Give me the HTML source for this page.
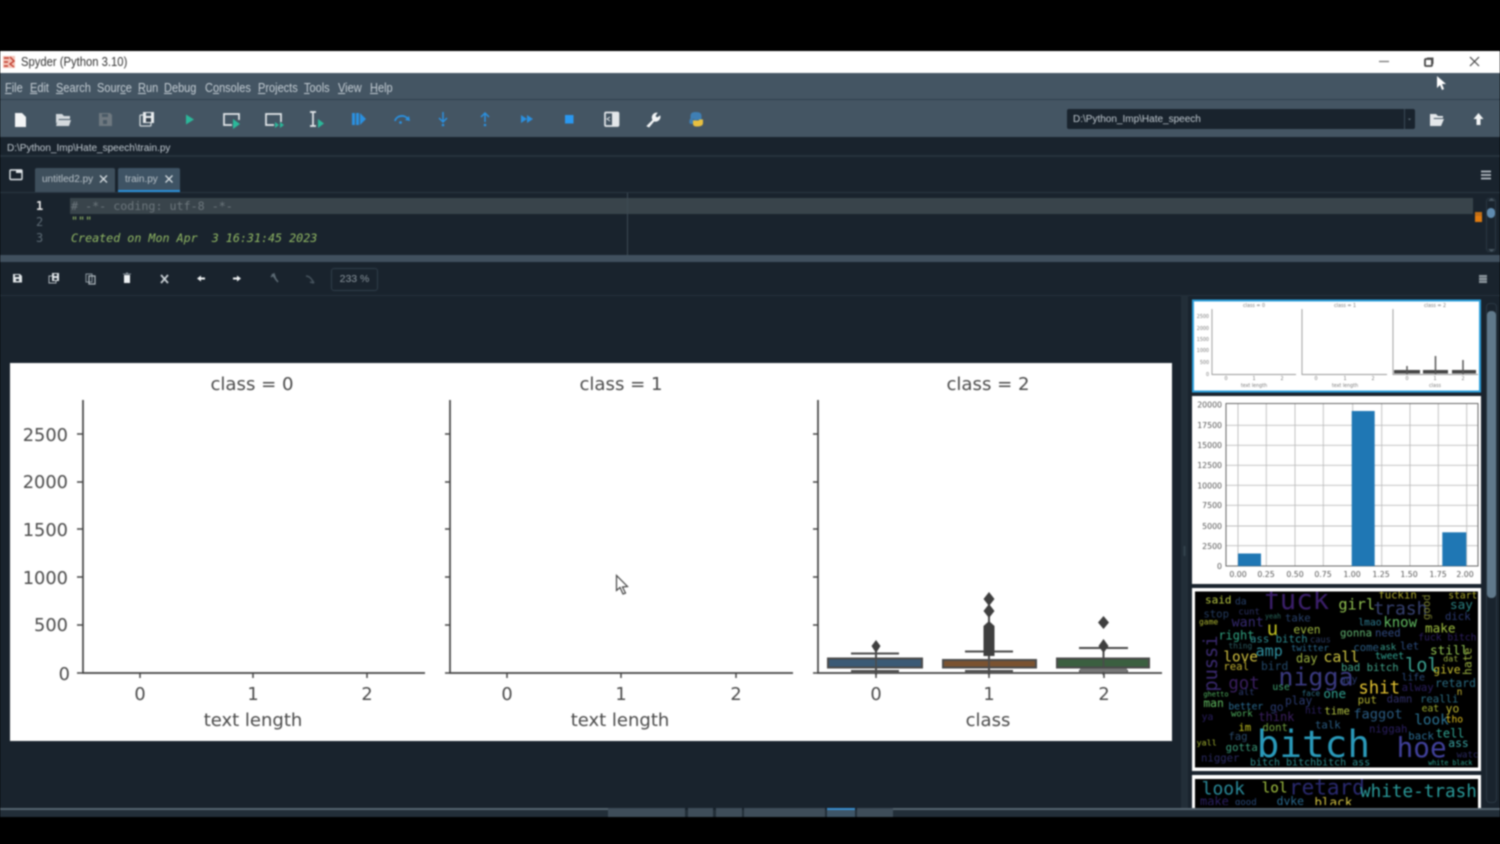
<!DOCTYPE html>
<html><head><meta charset="utf-8"><title>Spyder (Python 3.10)</title>
<style>
html,body{margin:0;padding:0;background:#000;width:1500px;height:844px;overflow:hidden}
#f{position:absolute;left:0;top:0;width:1500px;height:844px;filter:blur(.7px);overflow:hidden;font-family:"Liberation Sans",sans-serif}
.a{position:absolute}
svg{position:absolute;left:0;top:0;overflow:visible}
.m{position:absolute;top:81px;font-size:12.5px;color:#c3ccd3;line-height:15px;transform:scaleX(.88);transform-origin:0 0}
.m u{text-decoration:underline}
.c{font-family:"DejaVu Sans Mono","Liberation Mono",monospace;font-size:11.7px;white-space:pre}
</style></head><body><div id="f">
<div class="a" style="left:0;top:51px;width:1500px;height:22px;background:#fff"></div>
<div class="a" style="left:21px;top:55px;font-size:12.5px;color:#333;transform:scaleX(.9);transform-origin:0 0;white-space:nowrap">Spyder (Python 3.10)</div>
<div class="a" style="left:0;top:73px;width:1500px;height:27px;background:#445563;border-bottom:1px solid #2f3f4c;box-sizing:border-box"></div>
<div class="a" style="left:0;top:100px;width:1500px;height:37px;background:#445563"></div>
<div class="a" style="left:0;top:137px;width:1500px;height:680px;background:#19232d"></div>
<div class="a" style="left:0;top:155px;width:1500px;height:2px;background:#25323d"></div>
<span class="m" style="left:5px"><u>F</u>ile</span><span class="m" style="left:30px"><u>E</u>dit</span><span class="m" style="left:56px"><u>S</u>earch</span><span class="m" style="left:97px">Sour<u>c</u>e</span><span class="m" style="left:138px"><u>R</u>un</span><span class="m" style="left:164px"><u>D</u>ebug</span><span class="m" style="left:205px">C<u>o</u>nsoles</span><span class="m" style="left:258px"><u>P</u>rojects</span><span class="m" style="left:304px"><u>T</u>ools</span><span class="m" style="left:338px"><u>V</u>iew</span><span class="m" style="left:370px"><u>H</u>elp</span>
<div class="a" style="left:7px;top:143px;font-size:10px;color:#c0c9d0">D:\Python_Imp\Hate_speech\train.py</div>
<div class="a" style="left:1067px;top:109px;width:348px;height:20px;background:#19232d;border-radius:2px"></div>
<div class="a" style="left:1404px;top:109px;width:1px;height:20px;background:#3a4a57"></div>
<div class="a" style="left:1073px;top:114px;font-size:10px;color:#c0c9d0">D:\Python_Imp\Hate_speech</div>
<div class="a" style="left:35px;top:168px;width:80px;height:24px;background:#3e4f5c;border-radius:2px 2px 0 0"></div>
<div class="a" style="left:118px;top:168px;width:62px;height:24px;background:#3e5364;border-radius:2px 2px 0 0;border-bottom:2px solid #2a8fd8;box-sizing:border-box"></div>
<div class="a" style="left:42px;top:174px;font-size:10px;color:#b7c0c7">untitled2.py</div>
<div class="a" style="left:125px;top:174px;font-size:10px;color:#b7c0c7">train.py</div>
<div class="a" style="left:0;top:192px;width:1500px;height:1px;background:#2a3742"></div>
<div class="a" style="left:70px;top:198px;width:1403px;height:16px;background:#39444b"></div>
<div class="a" style="left:627px;top:193px;width:1px;height:62px;background:#3d4a54"></div>
<div class="a" style="left:36px;top:199px;font:bold 12px 'DejaVu Sans Mono',monospace;color:#e6e6e6">1</div>
<div class="a" style="left:36px;top:215px;font:12px 'DejaVu Sans Mono',monospace;color:#5c6a74">2</div>
<div class="a" style="left:36px;top:231px;font:12px 'DejaVu Sans Mono',monospace;color:#5c6a74">3</div>
<div class="a c" style="left:71px;top:199px;color:#6c767c"># -*- coding: utf-8 -*-</div>
<div class="a c" style="left:71px;top:214px;color:#9bbf6a">"""</div>
<div class="a c" style="left:71px;top:231px;color:#92b964;font-style:italic">Created on Mon Apr  3 16:31:45 2023</div>
<div class="a" style="left:1475px;top:212px;width:7px;height:4px;background:#c46f14"></div>
<div class="a" style="left:1475px;top:216px;width:7px;height:6px;background:#e07b10"></div>
<div class="a" style="left:1486px;top:198px;width:10px;height:54px;border:1px solid #2a3843;box-sizing:border-box;border-radius:3px"></div>
<div class="a" style="left:1487px;top:208px;width:8px;height:10px;background:#5f8bb0;border-radius:4px"></div>
<div class="a" style="left:0;top:255px;width:1500px;height:7px;background:#40505e"></div>
<div class="a" style="left:331px;top:268px;width:45px;height:21px;border:1px solid #2f3d49;border-radius:3px;font-size:10.5px;color:#8a959d;text-align:center;line-height:21px">233 %</div>
<div class="a" style="left:0;top:295px;width:1500px;height:1px;background:#25323d"></div>
<div class="a" style="left:1181px;top:295px;width:7px;height:513px;background:#222e38"></div>
<div class="a" style="left:1483px;top:296px;width:17px;height:512px;background:#19232d"></div>
<div class="a" style="left:1486px;top:303px;width:11px;height:500px;border:1px solid #2a3843;border-radius:4px;box-sizing:border-box"></div>
<div class="a" style="left:1487px;top:311px;width:9px;height:287px;background:#60798b;border-radius:4px"></div>
<div class="a" style="left:10px;top:363px;width:1162px;height:378px;background:#fff"></div>
<div class="a" style="left:0;top:808px;width:608px;height:2px;background:#55646f"></div>
<div class="a" style="left:893px;top:808px;width:607px;height:2px;background:#55646f"></div>
<div class="a" style="left:0;top:810px;width:1500px;height:7px;background:#222e38"></div>
<div class="a" style="left:608px;top:808px;width:77px;height:9px;background:#3e4d59"></div>
<div class="a" style="left:688px;top:808px;width:25px;height:9px;background:#3e4d59"></div>
<div class="a" style="left:716px;top:808px;width:26px;height:9px;background:#3e4d59"></div>
<div class="a" style="left:744px;top:808px;width:81px;height:9px;background:#3e4d59"></div>
<div class="a" style="left:827px;top:808px;width:28px;height:9px;background:#3e5567;border-top:2px solid #3a8fd0;box-sizing:border-box"></div>
<div class="a" style="left:857px;top:808px;width:36px;height:9px;background:#3e4d59"></div>

<svg width="1500" height="844" viewBox="0 0 1500 844">
<!-- app icon / window controls -->
<rect x="3" y="56" width="12" height="12" fill="#f4c4b8"/><path d="M4 58h5M4 62h4M4 66h4M10 57l4 4-4 3 4 3" stroke="#c0392b" stroke-width="1.400" fill="none"/>
<path d="M1379 61.500h10" stroke="#777" stroke-width="1.300"/>
<rect x="1425" y="59" width="7" height="7" rx="1" fill="none" stroke="#444" stroke-width="1.800"/><path d="M1427 58h6v6" fill="none" stroke="#555"/>
<path d="M1470 57l9 9M1479 57l-9 9" stroke="#444" stroke-width="1.200"/>
<path d="M1437 76v12l3-3 2 5 2-1-2-5h4z" fill="#fff"/>

<!-- main toolbar icons -->
<path d="M15 113h7l4 4v10H15z" fill="#f2f4f5"/>
<path d="M56 114h6l2 2h6v3H59l-3 5zM58 120h13l-2 6H56z" fill="#d3d9dd"/>
<path d="M99 113h11l2 2v11H99z" fill="#6e7880"/><rect x="102" y="114" width="6" height="3" fill="#4a5a66"/><rect x="103" y="120" width="4" height="4" fill="#4a5a66"/>
<rect x="140" y="115" width="11" height="11" rx="1" fill="none" stroke="#cfd6da" stroke-width="1.300"/><path d="M143 112h11v11h-11z" fill="#e8ecee"/><rect x="146" y="113" width="5" height="3" fill="#445563"/><rect x="146" y="118" width="5" height="4" fill="#333f4a"/>
<path d="M186 114.500l8 5-8 5z" fill="#2bb89a"/>
<path d="M232 125h-8v-11h15v6" fill="none" stroke="#e3e7ea" stroke-width="1.700"/><path d="M233 119l7 5-7 5z" fill="#2bb89a"/>
<path d="M274 125h-8v-11h15v8" fill="none" stroke="#e3e7ea" stroke-width="1.700"/><path d="M275 122l4 3-4 3zM280 122l4 3-4 3z" fill="#2bb89a"/>
<path d="M310 112h6M310 126h6M313 112v14" stroke="#e3e7ea" stroke-width="1.700" fill="none"/><path d="M318 119l6 4.500-6 4.500z" fill="#2bb89a"/>
<path d="M352 113h3v12h-3zM356 113h3v12h-3z" fill="#2a90e0"/><path d="M360 113l6 6-6 6z" fill="#2a90e0"/>
<path d="M395 121a7 6 0 0 1 13-2" fill="none" stroke="#2a90e0" stroke-width="1.800"/><path d="M405 120l5 1-1-5z" fill="#2a90e0"/><circle cx="400.500" cy="122.500" r="1.400" fill="#2a90e0"/>
<path d="M443 112v9M439 118l4 4 4-4" fill="none" stroke="#2a90e0" stroke-width="1.500"/><circle cx="443" cy="125" r="1.300" fill="#2a90e0"/>
<path d="M485 114v8M481 117l4-4 4 4" fill="none" stroke="#2a90e0" stroke-width="1.500"/><circle cx="485" cy="125" r="1.300" fill="#2a90e0"/>
<path d="M521 115l6 4-6 4zM527 115l6 4-6 4z" fill="#2a90e0"/>
<rect x="565" y="115" width="8.500" height="8.500" fill="#2a98f0"/>
<rect x="605" y="112.500" width="13.500" height="13.500" rx="1" fill="none" stroke="#e3e7ea" stroke-width="1.700"/><rect x="612" y="113" width="6" height="13" fill="#e3e7ea"/><path d="M610 117l-3 2 3 2" fill="none" stroke="#e3e7ea"/>
<path d="M647 126l6-6a4.500 4.500 0 0 1 4-7l-2 3 2 2 3-2a4.500 4.500 0 0 1-6 5l-5 6z" fill="#f2f4f5" stroke="#f2f4f5" stroke-width=".8"/>
<path d="M691 119v-3c0-3 2-3.500 5-3.500s5 .5 5 3v3h-6v1h7" fill="#3f7fb4" stroke="#3f7fb4"/><path d="M691 119h-1c-1 2-1 5 1 5h2v-3h6" fill="#3f7fb4"/>
<path d="M703 119v4c0 3-3 3.500-6 3.500s-4-1-4-3v-3h6v-1h4z" fill="#e8c040"/>

<!-- right icons -->
<path d="M1430 114h6l2 2h5v2h-9l-4 8zM1433 119h11l-3 7h-11z" fill="#e3e7ea"/>
<path d="M1478.500 113l5 6h-3v6h-4v-6h-3z" fill="#f2f4f5"/>
<path d="M1408 118.500h3l-1.500 2z" fill="#5a6872"/>

<!-- tab bar icons -->
<rect x="10" y="170" width="12" height="9.500" rx="1" fill="none" stroke="#dfe4e7" stroke-width="1.400"/><path d="M16 170h6v3h-6z" fill="#dfe4e7"/>
<path d="M100 175.500l7 7M107 175.500l-7 7M165.500 175.500l7 7M172.500 175.500l-7 7" stroke="#d5dce0" stroke-width="1.300"/>
<path d="M1481 171.500h10M1481 175h10M1481 178.500h10" stroke="#b5bec5" stroke-width="1.700"/>
<path d="M1488 201l3.500-3 3.500 3zM1488 249l3.500 3 3.500-3z" fill="#46545f"/>

<!-- plots toolbar -->
<path d="M13 274h7l2 2v6.500h-9z" fill="#dfe4e7"/><rect x="15" y="275" width="4" height="2" fill="#19232d"/><rect x="16" y="279" width="3" height="2" fill="#19232d"/>
<rect x="49" y="276" width="7" height="7" fill="none" stroke="#aeb6bc"/><path d="M52 273h7v8h-7z" fill="#dfe4e7"/><rect x="54" y="274" width="3" height="2" fill="#19232d"/><rect x="54" y="278" width="3" height="2" fill="#19232d"/>
<rect x="86" y="274" width="6" height="8" fill="none" stroke="#8a959d"/><rect x="89" y="276" width="6" height="8" fill="none" stroke="#b0b9bf" stroke-width="1.200"/>
<rect x="124" y="275" width="6" height="8" fill="#eef1f3"/><path d="M123 274h8M126 273h2" stroke="#8a959d"/>
<path d="M161 275l7 8M168 275l-7 8" stroke="#c7ced3" stroke-width="1.800"/>
<path d="M197 278.500l4-3v2h4v2h-4v2z" fill="#eef1f3"/>
<path d="M241 278.500l-4-3v2h-4v2h4v2z" fill="#eef1f3"/>
<path d="M272 274l6 8M271 277l3-3 2 6" stroke="#5c6a74" stroke-width="1.500" fill="none"/>
<path d="M306 276c3 0 5 2 8 7M310 282l4 1" stroke="#47545e" stroke-width="1.500" fill="none"/>
<path d="M1479 275h8v8h-8z" fill="#8d979e"/><path d="M1479 277.500h8M1479 280.500h8" stroke="#19232d" stroke-width=".6"/>
<rect x="1183.500" y="546" width="2" height="10" fill="#33414c"/>

<!-- main plot -->
<g font-family="'DejaVu Sans',sans-serif" fill="#4a4a4a" font-size="17.800">
<path d="M83 400V673H425M450 400V673H793M818 400V673H1162" stroke="#444" stroke-width="1.700" fill="none"/>
<path d="M77 434h6M77 482h6M77 529h6M77 577h6M77 625h6M77 673h6M445 434h5M445 482h5M445 529h5M445 577h5M445 625h5M445 673h5M813 434h5M813 482h5M813 529h5M813 577h5M813 625h5M813 673h5" stroke="#444" stroke-width="1.500"/>
<path d="M140 673v5M253 673v5M367 673v5M507 673v5M621 673v5M736 673v5M876 673v5M989 673v5M1104 673v5" stroke="#444" stroke-width="1.500"/>
<g text-anchor="end"><text x="68" y="441">2500</text><text x="68" y="488">2000</text><text x="68" y="536">1500</text><text x="68" y="584">1000</text><text x="68" y="631">500</text><text x="70" y="680">0</text></g>
<g text-anchor="middle"><text x="140" y="700">0</text><text x="253" y="700">1</text><text x="367" y="700">2</text><text x="507" y="700">0</text><text x="621" y="700">1</text><text x="736" y="700">2</text><text x="876" y="700">0</text><text x="989" y="700">1</text><text x="1104" y="700">2</text>
<text x="253" y="726" font-size="18">text length</text><text x="620" y="726" font-size="18">text length</text><text x="988" y="726" font-size="18">class</text>
<text x="252" y="390" font-size="18.100">class = 0</text><text x="621" y="390" font-size="18.100">class = 1</text><text x="988" y="390" font-size="18.100">class = 2</text></g>
<!-- boxes -->
<g stroke="#4a4a4a" stroke-width="2" fill="none">
<path d="M851 653.500h48M851 671h48M965 651.500h48M965 671h48M1079 648h49M1079 671h49M876 645v30M989 600v75M1103.500 640v35"/>
</g>
<rect x="1080" y="667" width="47" height="5" fill="#777"/>
<rect x="828" y="658.500" width="94" height="9" fill="#3b5a75" stroke="#4a4a4a" stroke-width="2"/>
<rect x="943" y="660" width="93" height="7.500" fill="#7a5230" stroke="#4a4a4a" stroke-width="2"/>
<rect x="1057" y="658.500" width="92" height="9" fill="#3b5f40" stroke="#4a4a4a" stroke-width="2"/>
<path d="M876 658v9M989 660v8M1103.500 658v9" stroke="#4a4a4a" stroke-width="1.500"/>
<g fill="#3f3f3f"><path d="M876 640l4.500 6-4.500 7-4.500-7zM989 592l5.500 7-5.500 7-5.500-7zM989 604l5.500 7-5.500 7-5.500-7zM1103.500 616l5.500 6.500-5.500 6.500-5.500-6.500zM1103.500 639l5 7-5 7-5-7z"/><path d="M989 621l5.500 5v30h-11v-30z"/></g>
</g>

<!-- thumbnail 1 -->
<rect x="1193" y="300.500" width="287" height="91" fill="#fff" stroke="#2a9fdc" stroke-width="2"/>
<g font-family="'DejaVu Sans',sans-serif" fill="#777" font-size="4.800">
<path d="M1212 309V374.500H1296M1302 309V374.500H1387M1393 309V374.500H1478" stroke="#999" stroke-width=".9" fill="none"/>
<g text-anchor="end"><text x="1209" y="318">2500</text><text x="1209" y="330">2000</text><text x="1209" y="341">1500</text><text x="1209" y="352">1000</text><text x="1209" y="364">500</text><text x="1209" y="376">0</text></g>
<g text-anchor="middle"><text x="1226" y="380">0</text><text x="1254" y="380">1</text><text x="1282" y="380">2</text><text x="1316" y="380">0</text><text x="1345" y="380">1</text><text x="1373" y="380">2</text><text x="1407" y="380">0</text><text x="1435" y="380">1</text><text x="1463" y="380">2</text>
<text x="1254" y="387">text length</text><text x="1345" y="387">text length</text><text x="1435" y="387">class</text><text x="1254" y="307">class = 0</text><text x="1345" y="307">class = 1</text><text x="1435" y="307">class = 2</text></g>
<path d="M1394 370h26v3.500h-26zM1423 370h25v3.500h-25zM1452 370h24v3.500h-24z" fill="#444"/>
<path d="M1407 366v8M1435.500 356v18M1463 360v14" stroke="#555" stroke-width="1.500"/>
</g>

<!-- thumbnail 2 -->
<rect x="1192" y="396" width="289" height="188" fill="#fff"/>
<g stroke="#bdbdbd" stroke-width=".9"><path d="M1238 404V566M1266.300 404V566M1295 404V566M1323.300 404V566M1352.700 404V566M1381.700 404V566M1410 404V566M1438.300 404V566M1466.700 404V566M1226 545.700H1478M1226 526H1478M1226 505.300H1478M1226 485.300H1478M1226 465.300H1478M1226 445.300H1478M1226 425.300H1478"/></g>
<rect x="1226" y="403.500" width="252" height="162.500" fill="none" stroke="#666" stroke-width="1"/>
<rect x="1238" y="553.500" width="23" height="12.500" fill="#1f77b4"/><rect x="1351.700" y="411" width="23" height="155" fill="#1f77b4"/><rect x="1442.300" y="532.300" width="24" height="33.700" fill="#1f77b4"/>
<g font-family="'DejaVu Sans',sans-serif" fill="#555" font-size="7.800">
<g text-anchor="end"><text x="1222" y="407.500">20000</text><text x="1222" y="428">17500</text><text x="1222" y="448">15000</text><text x="1222" y="468">12500</text><text x="1222" y="488.500">10000</text><text x="1222" y="508">7500</text><text x="1222" y="529">5000</text><text x="1222" y="549">2500</text><text x="1222" y="569">0</text></g>
<g text-anchor="middle"><text x="1238" y="577">0.00</text><text x="1266" y="577">0.25</text><text x="1295" y="577">0.50</text><text x="1323" y="577">0.75</text><text x="1352" y="577">1.00</text><text x="1381" y="577">1.25</text><text x="1409" y="577">1.50</text><text x="1438" y="577">1.75</text><text x="1465" y="577">2.00</text></g></g>

<!-- word clouds -->
<rect x="1192" y="588" width="289" height="183" fill="#fff"/>
<rect x="1195" y="591.500" width="283" height="176" fill="#000"/>
<rect x="1192" y="775" width="289" height="33" fill="#fff"/>
<rect x="1195" y="779" width="283" height="29" fill="#000"/>
<defs><clipPath id="c1"><rect x="30" y="20" width="850" height="525"/></clipPath><clipPath id="c2"><rect x="30" y="582" width="850" height="78"/></clipPath></defs>
<g transform="translate(1185 585) scale(.3333)" font-family="'DejaVu Sans Mono','Liberation Mono',monospace">
<g clip-path="url(#c1)">
<text x="60" y="55" font-size="33" fill="#b5c440">said</text><text x="235" y="72" font-size="82" fill="#3b1f6a">fuck</text><text x="460" y="74" font-size="46" fill="#8fbf50">girl</text><text x="565" y="88" font-size="54" fill="#35406f">trash</text><text x="580" y="41" font-size="32" fill="#a9a52a">fuckin</text><text x="790" y="40" font-size="29" fill="#a8a52a">start</text><text x="795" y="72" font-size="38" fill="#2a7f80">say</text><text x="150" y="58" font-size="29" fill="#28406a">da</text>
<text x="55" y="98" font-size="32" fill="#233a5c">stop</text><text x="140" y="125" font-size="40" fill="#352a70">want</text><text x="300" y="110" font-size="32" fill="#28406a">take</text><text x="245" y="150" font-size="58" fill="#c0c020">u</text><text x="325" y="146" font-size="34" fill="#9fb840">even</text><text x="520" y="122" font-size="29" fill="#2d7a90">lmao</text><text x="595" y="126" font-size="42" fill="#60b860">know</text><text x="720" y="143" font-size="38" fill="#a0c040">make</text><text x="780" y="105" font-size="32" fill="#2a3a70">dick</text><text x="42" y="118" font-size="24" fill="#a8b030">game</text><text x="160" y="88" font-size="27" fill="#2a3060">cunt</text><text x="240" y="100" font-size="20" fill="#2a6a60">yeah</text>
<text x="100" y="163" font-size="36" fill="#30a080">right</text><text x="195" y="173" font-size="32" fill="#2d8a90">ass bitch</text><text x="465" y="155" font-size="32" fill="#60b070">gonna</text><text x="570" y="155" font-size="32" fill="#304a80">need</text><text x="700" y="166" font-size="29" fill="#2d1f60">fuck bitch</text><text x="375" y="172" font-size="26" fill="#2a3a60">caus</text>
<text x="115" y="229" font-size="43" fill="#d0c040">love</text><text x="212" y="213" font-size="45" fill="#3090a0">amp</text><text x="318" y="198" font-size="27" fill="#2a6a90">twitter</text><text x="505" y="198" font-size="32" fill="#2a5a80">come</text><text x="585" y="195" font-size="27" fill="#3aa090">ask</text><text x="645" y="193" font-size="32" fill="#2a4a7a">let</text><text x="735" y="209" font-size="38" fill="#90c050">still</text><text x="415" y="231" font-size="45" fill="#c9c040">call</text><text x="333" y="233" font-size="36" fill="#9ab040">day</text><text x="570" y="222" font-size="29" fill="#30a090">tweet</text><text x="775" y="230" font-size="25" fill="#9ab040">dat</text><text x="130" y="190" font-size="24" fill="#2a5a60">thing</text>
<text x="115" y="255" font-size="32" fill="#c0b030">real</text><text x="228" y="255" font-size="34" fill="#23486a">bird</text><text x="468" y="258" font-size="32" fill="#40a088">bad bitch</text><text x="660" y="259" font-size="56" fill="#3aa090">lol</text><text x="745" y="266" font-size="34" fill="#c9c030">give</text><text x="280" y="302" font-size="75" fill="#3a3a80">nigga</text><text x="465" y="292" font-size="29" fill="#2a3a70">guy</text><text x="650" y="286" font-size="29" fill="#2a4a7a">life</text>
<text transform="translate(96 320) rotate(-90)" font-size="56" fill="#3a2a70">pussi</text><text x="130" y="312" font-size="52" fill="#3a1f60">got</text><text transform="translate(860 270) rotate(-90)" font-size="34" fill="#9ab040">hate</text><text transform="translate(735 105) rotate(-90)" font-size="32" fill="#7a8030">good</text>
<text x="520" y="326" font-size="52" fill="#e0c030">shit</text><text x="650" y="318" font-size="32" fill="#2a1f60">alway</text><text x="750" y="306" font-size="34" fill="#2a6a80">retard</text><text x="262" y="315" font-size="29" fill="#40a070">use</text><text x="415" y="339" font-size="38" fill="#30a090">one</text><text x="55" y="335" font-size="21" fill="#50b060">ghetto</text><text x="160" y="330" font-size="27" fill="#2a3a70">alt</text><text x="350" y="333" font-size="23" fill="#2a6a80">face</text><text x="815" y="330" font-size="29" fill="#c0b030">n</text>
<text x="55" y="366" font-size="34" fill="#60b860">man</text><text x="130" y="373" font-size="29" fill="#2a6a90">better</text><text x="300" y="359" font-size="34" fill="#2a3a70">play</text><text x="518" y="356" font-size="32" fill="#b0b030">put</text><text x="605" y="353" font-size="32" fill="#30306a">damn</text><text x="705" y="353" font-size="32" fill="#2a6a80">realli</text><text x="255" y="378" font-size="34" fill="#2a3a70">go</text>
<text x="138" y="395" font-size="27" fill="#50b060">work</text><text x="418" y="388" font-size="32" fill="#b0c040">time</text><text x="505" y="401" font-size="41" fill="#2a5a80">faggot</text><text x="710" y="380" font-size="29" fill="#a0b030">eat</text><text x="782" y="383" font-size="34" fill="#c0b830">yo</text><text x="220" y="408" font-size="36" fill="#3a1f60">think</text><text x="688" y="419" font-size="43" fill="#2a7090">look</text><text x="782" y="412" font-size="29" fill="#e0c020">tho</text><text x="360" y="385" font-size="29" fill="#2a1f60">hit</text>
<text x="390" y="431" font-size="32" fill="#2a5a80">talk</text><text x="552" y="442" font-size="32" fill="#2a1f60">niggah</text><text x="160" y="438" font-size="32" fill="#c0c020">im</text><text x="232" y="438" font-size="32" fill="#70a040">dont</text><text x="50" y="405" font-size="29" fill="#2a1f60">ya</text>
<text x="215" y="516" font-size="113" fill="#2a9aba">bitch</text><text x="130" y="465" font-size="32" fill="#2a4a6a">fag</text><text x="670" y="463" font-size="32" fill="#2a6a90">back</text><text x="752" y="458" font-size="36" fill="#30a090">tell</text><text x="790" y="486" font-size="34" fill="#3aa0a0">ass</text><text x="35" y="482" font-size="25" fill="#a0b030">yall</text>
<text x="635" y="516" font-size="83" fill="#40409a">hoe</text><text x="122" y="498" font-size="32" fill="#3a9a7a">gotta</text><text x="48" y="530" font-size="32" fill="#2a2a60">nigger</text><text x="195" y="541" font-size="30" fill="#2d8a8a">bitch bitchbitch ass</text><text x="815" y="518" font-size="27" fill="#2a2a60">watch</text><text x="730" y="540" font-size="20" fill="#30a090">white black</text>
</g>
<g clip-path="url(#c2)">
<text x="50" y="628" font-size="54" fill="#2a8a9a">look</text><text x="230" y="622" font-size="43" fill="#a0c040">lol</text><text x="312" y="629" font-size="63" fill="#2a2a70">retard</text><text x="525" y="636" font-size="53" fill="#2a9a9a">white-trash</text><text x="45" y="662" font-size="36" fill="#2a1f60">make</text><text x="150" y="660" font-size="27" fill="#2a4a7a">good</text><text x="275" y="660" font-size="34" fill="#2a6a90">dyke</text><text x="388" y="665" font-size="38" fill="#d0c040">black</text>
</g>
</g>

<!-- plot cursor -->
<path d="M616.500 575.500v15l3.500-3 3 6.500 2.500-1-3-6 5-.5z" fill="#fff" stroke="#444" stroke-width="1.200"/>
</svg>
</div></body></html>
